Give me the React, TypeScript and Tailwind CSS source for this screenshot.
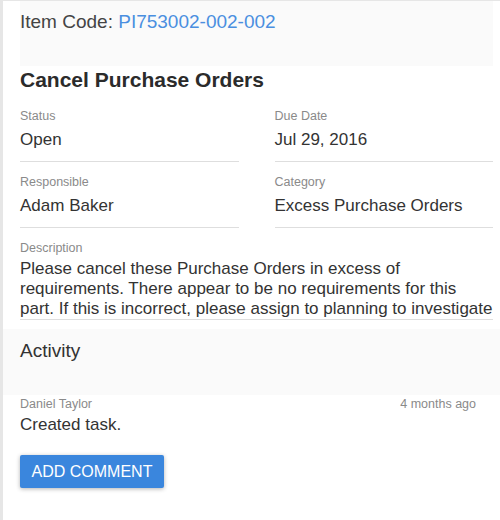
const fields = [
  [
    { label: "Status", value: "Open" },
    { label: "Due Date", value: "Jul 29, 2016" }
  ],
  [
    { label: "Responsible", value: "Adam Baker" },
    { label: "Category", value: "Excess Purchase Orders" }
  ]
];

function Field({ label, value }: { label: string; value: string }) {
  return (
    <div className="border-b border-[#dedede] pb-[11px]">
      <div className="text-[12.5px] leading-4 text-[#8a8a8a]">{label}</div>
      <div className="mt-[6px] text-[17px] leading-5 text-[#333]">{value}</div>
    </div>
  );
}

export default function App() {
  return (
    <div
      className="h-[520px] w-[500px] overflow-hidden border-l-[3px] border-t border-[#e6e6e6] bg-white"
      style={{ fontFamily: '"Liberation Sans", Arial, sans-serif' }}
    >
      <div className="pl-[17px] pr-[7px]">
        <div className="h-[65px] bg-[#fafafa] pt-[9px] text-[19px] leading-6 text-[#444]">
          Item Code: <span className="text-[#4a8fe0]">PI753002-002-002</span>
        </div>

        <h1 className="mt-[2px] text-[21px] font-bold leading-6 text-[#2b2b2b]">
          Cancel Purchase Orders
        </h1>

        <div className="mt-[16px] flex flex-col gap-[12px]">
          {fields.map((row, i) => (
            <div key={i} className="grid grid-cols-2 gap-[36px]">
              {row.map((f) => (
                <Field key={f.label} label={f.label} value={f.value} />
              ))}
            </div>
          ))}

          <div className="border-b border-[#dedede]">
            <div className="text-[12.5px] leading-4 text-[#8a8a8a]">Description</div>
            <p className="mt-[3px] text-[17px] leading-5 text-[#333]">
              Please cancel these Purchase Orders in excess of requirements. There appear to be no
              requirements for this part. If this is incorrect, please assign to planning to
              investigate
            </p>
          </div>
        </div>
      </div>

      <div className="mt-[9px] h-[66px] bg-[#fafafa] pl-[17px] pt-[10px] text-[19px] leading-6 text-[#333]">
        Activity
      </div>

      <div className="pl-[17px] pr-[24px]">
        <div className="mt-[1px] flex justify-between text-[12.5px] leading-4 text-[#8a8a8a]">
          <span>Daniel Taylor</span>
          <span>4 months ago</span>
        </div>
        <div className="mt-[1px] text-[17px] leading-6 text-[#333]">Created task.</div>

        <button className="mt-[18px] h-[33px] w-[144px] rounded-[2px] bg-[#3a86dd] text-[16px] uppercase text-white shadow-[0_1px_4px_rgba(0,0,0,0.3)]">
          Add Comment
        </button>
      </div>
    </div>
  );
}
